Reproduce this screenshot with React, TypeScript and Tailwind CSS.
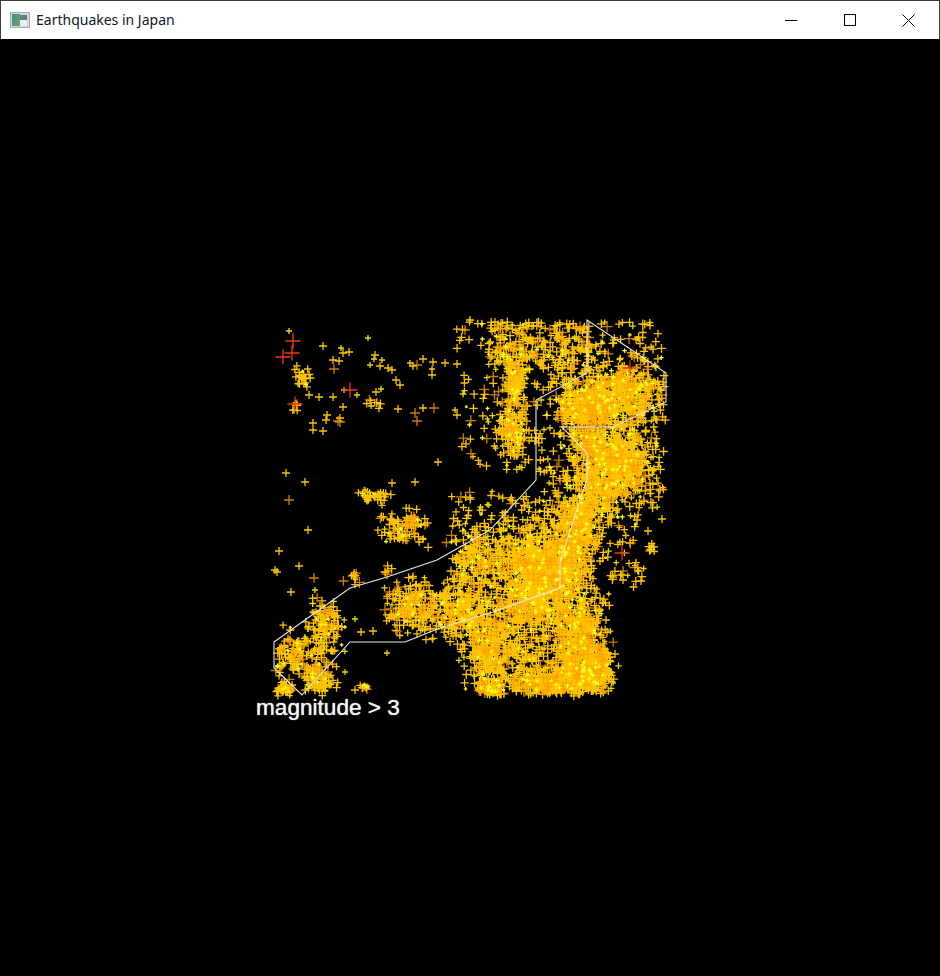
import { useMemo } from 'react';

// seeded so every render draws the same quakes
function makeRandom(seed: number) {
  let s = seed;
  return () => {
    s = (s * 1664525 + 1013904223) % 4294967296;
    return s / 4294967296;
  };
}

const OUTLINE =
  '274,642 274,668 302,695 350,642 405,642 440,628 493,612 560,588 560,562 580,500 587,480 587,453 562,427 613,427 666,402 666,373 587,320 587,373 536,400 536,480 490,530 437,560 387,577 350,588 274,642';

// cx, cy, spread x, spread y, count
const BLOBS: number[][] = [
  [618, 395, 22, 15, 620],
  [585, 408, 15, 13, 300],
  [622, 462, 13, 17, 420],
  [600, 490, 13, 18, 280],
  [592, 445, 12, 12, 190],
  [515, 382, 6, 14, 130],
  [513, 428, 7, 14, 150],
  [545, 572, 22, 22, 1000],
  [578, 525, 12, 24, 420],
  [530, 610, 18, 12, 220],
  [578, 640, 13, 22, 480],
  [592, 672, 11, 10, 280],
  [488, 650, 10, 16, 220],
  [525, 652, 18, 16, 170],
  [548, 684, 22, 6, 280],
  [490, 688, 6, 4, 80],
  [462, 612, 16, 13, 260],
  [412, 605, 14, 12, 190],
  [480, 560, 16, 18, 200],
  [405, 528, 13, 8, 90],
  [375, 496, 7, 4, 32],
  [326, 626, 9, 14, 110],
  [296, 656, 14, 10, 110],
  [285, 688, 4, 3, 50],
  [318, 680, 7, 9, 90],
  [365, 687, 3, 2, 12],
  [356, 578, 5, 3, 12],
  [388, 572, 3, 3, 6],
  [303, 375, 5, 6, 24],
  [296, 407, 2, 3, 6],
  [372, 404, 5, 3, 8],
  [650, 548, 2, 3, 8],
];

// x0, y0, x1, y1, count: even scatter
const SCATTER: number[][] = [
  [488, 322, 590, 370, 300],
  [590, 322, 662, 368, 60],
  [455, 322, 490, 350, 12],
  [460, 350, 536, 470, 90],
  [536, 372, 590, 480, 90],
  [630, 430, 664, 510, 70],
  [610, 500, 645, 590, 40],
  [455, 590, 610, 692, 200],
  [395, 575, 460, 640, 60],
  [450, 490, 560, 570, 160],
  [280, 625, 345, 695, 35],
];

// hand placed, sparse points: x, y, kind (0 yellow, 1 gold, 2 orange, 3 red)
const SINGLES: number[][] = [
  [289, 331, 0], [293, 341, 3], [283, 357, 3], [292, 353, 3], [323, 346, 1], [341, 348, 0],
  [343, 353, 1], [349, 352, 1], [368, 338, 0], [333, 360, 1], [339, 361, 1], [334, 369, 2],
  [375, 355, 1], [382, 360, 0], [374, 359, 0], [370, 365, 0], [380, 366, 1], [388, 368, 1],
  [392, 370, 1], [396, 380, 1], [400, 385, 1], [410, 363, 0], [413, 366, 1], [417, 365, 2],
  [423, 359, 1], [433, 362, 1], [432, 369, 0], [432, 375, 1], [445, 363, 1], [457, 364, 1],
  [309, 395, 1], [319, 397, 1], [333, 397, 1], [343, 407, 1], [340, 418, 1], [327, 415, 1],
  [326, 420, 1], [338, 421, 2], [340, 422, 2], [313, 423, 1], [313, 430, 1], [323, 431, 1],
  [344, 390, 0], [350, 390, 3], [357, 395, 0], [376, 392, 1], [381, 389, 0], [398, 409, 1],
  [415, 413, 2], [417, 421, 2], [434, 408, 2], [423, 408, 1], [455, 410, 0], [457, 415, 1],
  [438, 462, 1], [286, 473, 1], [305, 482, 1], [289, 500, 2], [365, 490, 0], [392, 483, 1],
  [415, 482, 1], [308, 530, 1], [279, 551, 1], [299, 566, 1], [275, 570, 1], [277, 572, 1],
  [314, 578, 2], [291, 592, 1], [355, 619, 0], [373, 631, 1], [387, 653, 0], [622, 553, 3],
  [630, 543, 1], [637, 520, 1], [662, 519, 1], [648, 531, 1], [641, 581, 1], [623, 580, 1],
  [615, 654, 1], [606, 620, 1], [320, 606, 1], [315, 590, 0], [361, 632, 1], [345, 672, 0],
  [355, 690, 1], [630, 368, 3], [295, 404, 3], [465, 330, 2], [470, 320, 1], [495, 322, 1],
];

const KINDS = [
  { color: '#ecd800', size: 2.5 },
  { color: '#ffc400', size: 3.5 },
  { color: '#ff9d00', size: 4.5 },
  { color: '#ee3a10', size: 7 },
  { color: '#f6ff1e', size: 1.5 },
];

function cross(x: number, y: number, r: number) {
  const a = x.toFixed(1);
  const b = y.toFixed(1);
  return `M${(x - r).toFixed(1)} ${b}H${(x + r).toFixed(1)}M${a} ${(y - r).toFixed(1)}V${(y + r).toFixed(1)}`;
}

function buildQuakes() {
  const rnd = makeRandom(1995);
  const paths = ['', '', '', '', ''];
  const gauss = () => (rnd() + rnd() + rnd() + rnd() - 2) * 1.7;
  const pick = () => {
    const v = rnd();
    if (v < 0.16) return 0;
    if (v < 0.86) return 1;
    if (v < 0.94) return 2;
    return 4;
  };
  const add = (x: number, y: number, k: number) => {
    if (x < 274 || x > 666 || y < 320 || y > 696) return;
    paths[k] += cross(x, y, KINDS[k].size + rnd());
  };
  for (const [cx, cy, sx, sy, n] of BLOBS) {
    for (let i = 0; i < n; i++) add(cx + gauss() * sx, cy + gauss() * sy, pick());
  }
  for (const [x0, y0, x1, y1, n] of SCATTER) {
    for (let i = 0; i < n; i++) add(x0 + rnd() * (x1 - x0), y0 + rnd() * (y1 - y0), pick());
  }
  for (const [x, y, k] of SINGLES) paths[k] += cross(x, y, KINDS[k].size + 0.5);
  return paths;
}

function QuakeMap() {
  const paths = useMemo(buildQuakes, []);
  return (
    <svg width="940" height="937" viewBox="0 39 940 937" className="absolute inset-0">
      <g fill="none" strokeWidth="1.3">
        <path d={paths[0]} stroke={KINDS[0].color} />
        <path d={paths[1]} stroke={KINDS[1].color} />
        <path d={paths[2]} stroke={KINDS[2].color} opacity="0.8" />
        <path d={paths[3]} stroke={KINDS[3].color} />
        <path d={paths[4]} stroke={KINDS[4].color} />
      </g>
      <polyline points={OUTLINE} fill="none" stroke="#e8e8e8" strokeWidth="1.1" />
    </svg>
  );
}

function AppIcon() {
  return (
    <svg width="20" height="16" viewBox="0 0 20 16" className="shrink-0">
      <defs>
        <linearGradient id="icon-fill" x1="0" y1="0" x2="1" y2="1">
          <stop offset="0" stopColor="#3f8f8a" />
          <stop offset="1" stopColor="#6fa56a" />
        </linearGradient>
      </defs>
      <rect x="0.5" y="0.5" width="19" height="15" fill="#d5d8da" stroke="#a9aeb2" />
      <rect x="2" y="2" width="8" height="12" fill="url(#icon-fill)" />
      <rect x="10" y="3" width="7" height="5" fill="#5f7f8f" />
      <rect x="10" y="8" width="7" height="6" fill="#eef0ee" />
    </svg>
  );
}

export default function App() {
  return (
    <div className="flex h-[976px] w-[940px] flex-col overflow-hidden bg-black">
      {/* Title bar */}
      <div className="flex h-[39px] shrink-0 items-center border-x border-t border-[#3c3c3c] bg-white">
        <div className="ml-[9px] flex items-center gap-[6px]">
          <AppIcon />
          <span className="font-['Noto_Sans',sans-serif] text-[14px] leading-none text-[#101828]">
            Earthquakes in Japan
          </span>
        </div>
        <div className="mr-px ml-auto flex items-center">
          <div className="flex h-[38px] w-[58px] items-center justify-center">
            <div className="h-px w-[12px] bg-black" />
          </div>
          <div className="flex h-[38px] w-[59px] items-center justify-center">
            <div className="h-[12px] w-[12px] border border-black" />
          </div>
          <div className="flex h-[38px] w-[59px] items-center justify-center">
            <svg width="13" height="13" viewBox="0 0 13 13">
              <path d="M0.5 0.5L12.5 12.5M12.5 0.5L0.5 12.5" stroke="#000" strokeWidth="1" fill="none" />
            </svg>
          </div>
        </div>
      </div>

      {/* Canvas */}
      <div className="relative flex-1 bg-black">
        <QuakeMap />
        <div className="absolute left-[256px] top-[655px] font-['Liberation_Sans',sans-serif] text-[22.6px] leading-[28px] whitespace-nowrap text-[#f4f4f4] [text-shadow:0_0_1px_#ffffff]">
          magnitude &gt; 3
        </div>
      </div>
    </div>
  );
}
